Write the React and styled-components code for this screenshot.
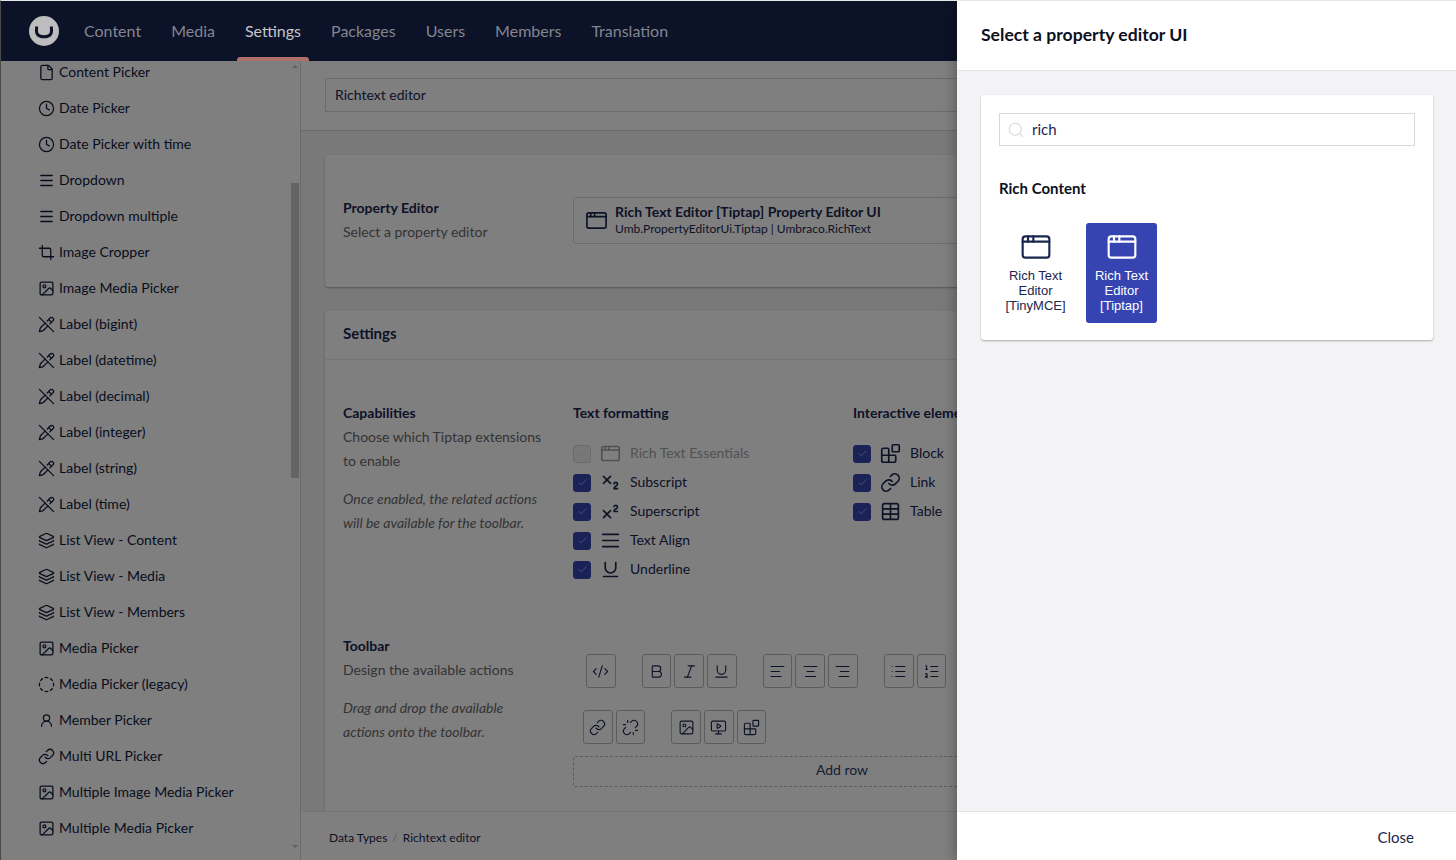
import React from "react";
import styled, { createGlobalStyle } from "styled-components";
import {
  File, Clock, Menu, Crop, Image as ImageIcon, PencilOff, Layers, CircleDashed, UserRound,
  AppWindow, Subscript, Superscript, AlignJustify, Underline, Blocks, Table, Link, CodeXml, Bold, Italic,
  AlignLeft, AlignCenter, AlignRight, List, ListOrdered, Unlink, MonitorPlay, Search, Check,
} from "lucide-react";

const Global = createGlobalStyle`
  html, body { margin: 0; padding: 0; background: #fff; }
  body { font-family: Lato, "Noto Sans", sans-serif; font-size: 14px; color: #1b264f; }
  * { box-sizing: border-box; }
`;

const Page = styled.div`
  position: relative; width: 1456px; height: 860px; overflow: hidden;
  display: flex; flex-direction: column; background: #fff;
  border-top: 1px solid #e6e6e6; border-left: 1px solid #4a4a4a;
`;
const Header = styled.header`
  position: relative; z-index: 2; flex: 0 0 60px; display: flex; align-items: center;
  padding-left: 28px; background: #0c1228;
`;
const Logo = styled.svg`width: 30px; height: 30px; margin-right: 10px; flex: none;`;
const Tab = styled.div`
  position: relative; height: 60px; line-height: 60px; padding: 0 15px; font-size: 16px;
  color: ${p => (p.$active ? "#c4c5c9" : "#84868f")};
  ${p => p.$active && `&::after{content:"";position:absolute;left:7px;right:7px;bottom:0;height:4px;border-radius:3px 3px 0 0;background:#b0706a;}`}
`;
const Body = styled.div`flex: 1; display: flex; min-height: 0;`;
const Sidebar = styled.aside`
  position: relative; flex: 0 0 300px; overflow: hidden; border-right: 1px solid #d8d7d9; background: #fff;
`;
const TreeList = styled.div`margin-top: -7px;`;
const TreeRow = styled.div`
  height: 36px; display: flex; align-items: center; padding-left: 36px; gap: 4px; font-size: 14px; color: #111a3c;
`;
const TreeLabel = styled.span`padding-bottom: 2px;`;
const IconSlot = styled.span`width: 18px; height: 18px; flex: none; display: flex; align-items: center; justify-content: center;`;
const ScrollThumb = styled.div`position: absolute; right: 1px; top: 122px; width: 8px; height: 295px; background: #c8c8c8;`;
const ScrollArrow = styled.div`
  position: absolute; right: 2px; width: 0; height: 0; border-left: 3px solid transparent; border-right: 3px solid transparent;
  ${p => p.$up ? `top: 4px; border-bottom: 3px solid #c0c0c0;` : `bottom: 12px; border-top: 3px solid #c0c0c0;`}
`;
const Main = styled.main`flex: 1; min-width: 0; display: flex; flex-direction: column; background: #f3f3f5;`;
const NameBar = styled.div`flex: 0 0 70px; padding: 17px 24px; background: #fff; border-bottom: 1px solid #d8d7d9;`;
const NameInput = styled.div`
  height: 34px; border: 1px solid #d8d7d9; padding: 0 9px; line-height: 31px; font-size: 14px; color: #1b264f;
`;
const Content = styled.div`flex: 1; min-height: 0; overflow: hidden; padding: 24px; display: flex; flex-direction: column; gap: 24px;`;
const Card = styled.section`
  flex: none; background: #fff; border-radius: 3px; box-shadow: 0 1px 2px rgba(0,0,0,.3);
`;
const PropertyGrid = styled.div`
  display: grid; grid-template-columns: 230px 1fr; padding: ${p => p.$pad || "0 18px"};
`;
const PropTitle = styled.div`font-weight: 700; line-height: 24px; color: #1b264f; font-size: 14px;`;
const PropDesc = styled.div`line-height: 24px; color: #68676b; font-size: 14px;`;
const PropNote = styled.div`line-height: 24px; color: #68676b; font-style: italic; font-size: 14px; margin-top: 14px;`;
const Picker = styled.div`
  height: 47px; margin-top: 1px; border: 1px solid #d8d7d9; border-radius: 3px; display: flex; align-items: center;
  padding-left: 11px; gap: 7px;
`;
const PickerTitle = styled.div`font-weight: 700; font-size: 14px; line-height: 16px; margin-bottom: 1px; color: #1b264f;`;
const PickerSub = styled.div`font-size: 12px; line-height: 16px; color: #1b264f;`;
const CardHead = styled.div`height: 49px; padding: 0 18px; line-height: 45px; border-bottom: 1px solid #e9e9eb; font-weight: 700; font-size: 15px;`;
const CardBody = styled.div`padding: 41px 0 80px;`;
const Groups = styled.div`display: grid; grid-template-columns: 280px 280px;`;
const GroupTitle = styled.div`font-weight: 700; font-size: 14px; line-height: 24px; margin-bottom: 14px; color: #1b264f; white-space: nowrap;`;
const CheckRow = styled.div`
  height: 29px; display: flex; align-items: center; font-size: 14px; color: ${p => (p.$off ? "#a3a3a6" : "#1b264f")};
`;
const Box = styled.span`
  width: 18px; height: 18px; border-radius: 3px; display: flex; align-items: center; justify-content: center; flex: none;
  background: ${p => (p.$off ? "#f1f1f1" : "#3544b1")}; border: 1px solid ${p => (p.$off ? "#d8d7d9" : "#3544b1")};
  color: ${p => (p.$off ? "#d8d7d9" : "#c4c8e8")}; margin-right: 9px;
`;
const CheckLabel = styled.span`margin-left: 9px; padding-bottom: 2px;`;
const Toolbar = styled.div`display: flex; flex-direction: column; padding-top: 20px;`;
const ToolRow = styled.div`display: flex; height: 34px; margin-left: ${p => p.$ml}px; margin-bottom: 22px; gap: 26px;`;
const ToolGroup = styled.div`display: flex; gap: 3px;`;
const ToolBtn = styled.div`
  width: 29.7px; height: 34px; border: 1px solid #b9b9bc; border-radius: 3px; display: flex; align-items: center; justify-content: center; color: #1b264f;
`;
const AddRow = styled.div`
  width: 538px; height: 31px; margin-top: -10px; border: 1px dashed #b9b9bc; border-radius: 2px; text-align: center; line-height: 25px; font-size: 14px; color: #303d68;
`;
const MainFooter = styled.footer`
  flex: 0 0 49px; background: #fff; border-top: 1px solid #e9e9eb; padding: 2px 0 0 28px; display: flex; align-items: center; font-size: 12px; color: #1b264f;
`;
const Sep = styled.span`color: #b9b9bc; margin: 0 5px;`;
const Overlay = styled.div`position: absolute; inset: 60px 0 0 0; background: rgba(0,0,0,.5); z-index: 1;`;
const Drawer = styled.aside`
  position: absolute; z-index: 3; top: 0; right: 0; bottom: 0; width: 499px; background: #f3f3f5; display: flex; flex-direction: column;
  box-shadow: 0 0 14px rgba(0,0,0,.35);
`;
const DrawerHead = styled.div`
  flex: 0 0 70px; background: #fff; border-bottom: 1px solid #e4e4e6; padding: 0 24px 2px; display: flex; align-items: center;
  font-weight: 700; font-size: 17.6px; color: #0d1020;
`;
const DrawerBody = styled.div`flex: 1; padding: 24px 23px 24px 24px;`;
const PickCard = styled.div`
  background: #fff; border-radius: 3px; height: 245px; padding: 18px; box-shadow: 0 1px 2px rgba(0,0,0,.3);
`;
const SearchBox = styled.div`
  height: 33px; border: 1px solid #d8d7d9; display: flex; align-items: center; padding-left: 7px; gap: 7px; color: #d8d7d9;
`;
const SearchText = styled.span`font-size: 15px; color: #1b264f; padding-bottom: 2px;`;
const GroupHead = styled.div`margin-top: 30px; font-weight: 700; font-size: 15px; line-height: 24px; color: #0d1020;`;
const Items = styled.div`display: flex; gap: 15px; margin-top: 23px; margin-left: 1px;`;
const Item = styled.div`
  width: 71px; height: 100px; border-radius: 3px; display: flex; flex-direction: column; align-items: center; padding-top: 8px;
  font-family: "Liberation Sans", Arial, sans-serif; font-size: 13px; line-height: 15px; text-align: center;
  background: ${p => (p.$on ? "#3544b1" : "transparent")}; color: ${p => (p.$on ? "#fff" : "#1b264f")};
`;
const ItemIcon = styled.span`display: flex; height: 36px; margin-bottom: 1px;`;
const DrawerFoot = styled.div`
  flex: 0 0 49px; background: #fff; border-top: 1px solid #e4e4e6; padding: 2px 42px 0 0; display: flex; align-items: center; justify-content: flex-end; font-size: 15px; color: #1b264f;
`;

const tree = [
  [File, "Content Picker"], [Clock, "Date Picker"], [Clock, "Date Picker with time"], [Menu, "Dropdown", 17, 1.9],
  [Menu, "Dropdown multiple", 17, 1.9], [Crop, "Image Cropper"], [ImageIcon, "Image Media Picker"], [PencilOff, "Label (bigint)"],
  [PencilOff, "Label (datetime)"], [PencilOff, "Label (decimal)"], [PencilOff, "Label (integer)"], [PencilOff, "Label (string)"],
  [PencilOff, "Label (time)"], [Layers, "List View - Content"], [Layers, "List View - Media"], [Layers, "List View - Members"],
  [ImageIcon, "Media Picker"], [CircleDashed, "Media Picker (legacy)"], [UserRound, "Member Picker", 15, 1.9], [Link, "Multi URL Picker"],
  [ImageIcon, "Multiple Image Media Picker"], [ImageIcon, "Multiple Media Picker"],
];
const textFmt = [
  [AppWindow, "Rich Text Essentials", true], [Subscript, "Subscript"], [Superscript, "Superscript"], [AlignJustify, "Text Align"], [Underline, "Underline"],
];
const interactive = [[Blocks, "Block"], [Link, "Link"], [Table, "Table"]];
const row1 = [[CodeXml], [Bold, Italic, Underline], [AlignLeft, AlignCenter, AlignRight], [List, ListOrdered]];
const row2 = [[Link, Unlink], [ImageIcon, MonitorPlay, Blocks]];

function CheckItem({ Icon, label, off }) {
  return (
    <CheckRow $off={off}>
      <Box $off={off}><Check size={11} strokeWidth={1.5} /></Box>
      <Icon size={21} strokeWidth={1.9} />
      <CheckLabel>{label}</CheckLabel>
    </CheckRow>
  );
}
function ToolRowView({ groups, ml }) {
  return (
    <ToolRow $ml={ml}>
      {groups.map((g, i) => (
        <ToolGroup key={i}>
          {g.map((I, j) => <ToolBtn key={j}><I size={17} strokeWidth={1.6} /></ToolBtn>)}
        </ToolGroup>
      ))}
    </ToolRow>
  );
}

export default function App() {
  return (
    <Page>
      <Global />
      <Header>
        <Logo viewBox="0 0 30 30">
          <circle cx="15" cy="15" r="15" fill="#bdbdbd" />
          <path d="M7.8 10.5c-.6 3.5-.4 6.5.8 8 1.2 1.6 3.4 2.2 6.4 2.2s5.2-.6 6.4-2.2c1.2-1.5 1.4-4.5.8-8" fill="none" stroke="#0c1228" strokeWidth="3" strokeLinecap="butt" />
        </Logo>
        {["Content", "Media", "Settings", "Packages", "Users", "Members", "Translation"].map(t => (
          <Tab key={t} $active={t === "Settings"}>{t}</Tab>
        ))}
      </Header>
      <Body>
        <Sidebar>
          <TreeList>
            {tree.map(([I, t, s, w]) => (
              <TreeRow key={t}><IconSlot><I size={s || 17} strokeWidth={w || 1.8} /></IconSlot><TreeLabel>{t}</TreeLabel></TreeRow>
            ))}
          </TreeList>
          <ScrollArrow $up />
          <ScrollThumb />
          <ScrollArrow />
        </Sidebar>
        <Main>
          <NameBar><NameInput>Richtext editor</NameInput></NameBar>
          <Content>
            <Card>
              <PropertyGrid $pad="41px 18px 43px">
                <div>
                  <PropTitle>Property Editor</PropTitle>
                  <PropDesc>Select a property editor</PropDesc>
                </div>
                <Picker>
                  <AppWindow size={23} strokeWidth={1.75} color="#1b264f" />
                  <div>
                    <PickerTitle>Rich Text Editor [Tiptap] Property Editor UI</PickerTitle>
                    <PickerSub>Umb.PropertyEditorUi.Tiptap | Umbraco.RichText</PickerSub>
                  </div>
                </Picker>
              </PropertyGrid>
            </Card>
            <Card>
              <CardHead>Settings</CardHead>
              <CardBody>
                <PropertyGrid>
                  <div>
                    <PropTitle>Capabilities</PropTitle>
                    <PropDesc>Choose which Tiptap extensions<br />to enable</PropDesc>
                    <PropNote>Once enabled, the related actions<br />will be available for the toolbar.</PropNote>
                  </div>
                  <Groups>
                    <div>
                      <GroupTitle>Text formatting</GroupTitle>
                      {textFmt.map(([I, t, off]) => <CheckItem key={t} Icon={I} label={t} off={off} />)}
                    </div>
                    <div>
                      <GroupTitle>Interactive elements</GroupTitle>
                      {interactive.map(([I, t]) => <CheckItem key={t} Icon={I} label={t} />)}
                    </div>
                  </Groups>
                </PropertyGrid>
                <PropertyGrid $pad="50px 18px 0">
                  <div>
                    <PropTitle>Toolbar</PropTitle>
                    <PropDesc>Design the available actions</PropDesc>
                    <PropNote>Drag and drop the available<br />actions onto the toolbar.</PropNote>
                  </div>
                  <Toolbar>
                    <ToolRowView groups={row1} ml={13} />
                    <ToolRowView groups={row2} ml={10} />
                    <AddRow>Add row</AddRow>
                  </Toolbar>
                </PropertyGrid>
              </CardBody>
            </Card>
          </Content>
          <MainFooter>Data Types<Sep>/</Sep>Richtext editor</MainFooter>
        </Main>
      </Body>
      <Overlay />
      <Drawer>
        <DrawerHead>Select a property editor UI</DrawerHead>
        <DrawerBody>
          <PickCard>
            <SearchBox><Search size={18} strokeWidth={1.4} /><SearchText>rich</SearchText></SearchBox>
            <GroupHead>Rich Content</GroupHead>
            <Items>
              <Item>
                <ItemIcon><AppWindow size={32} strokeWidth={1.6} /></ItemIcon>
                Rich Text Editor [TinyMCE]
              </Item>
              <Item $on>
                <ItemIcon><AppWindow size={32} strokeWidth={1.6} /></ItemIcon>
                Rich Text Editor [Tiptap]
              </Item>
            </Items>
          </PickCard>
        </DrawerBody>
        <DrawerFoot>Close</DrawerFoot>
      </Drawer>
    </Page>
  );
}
